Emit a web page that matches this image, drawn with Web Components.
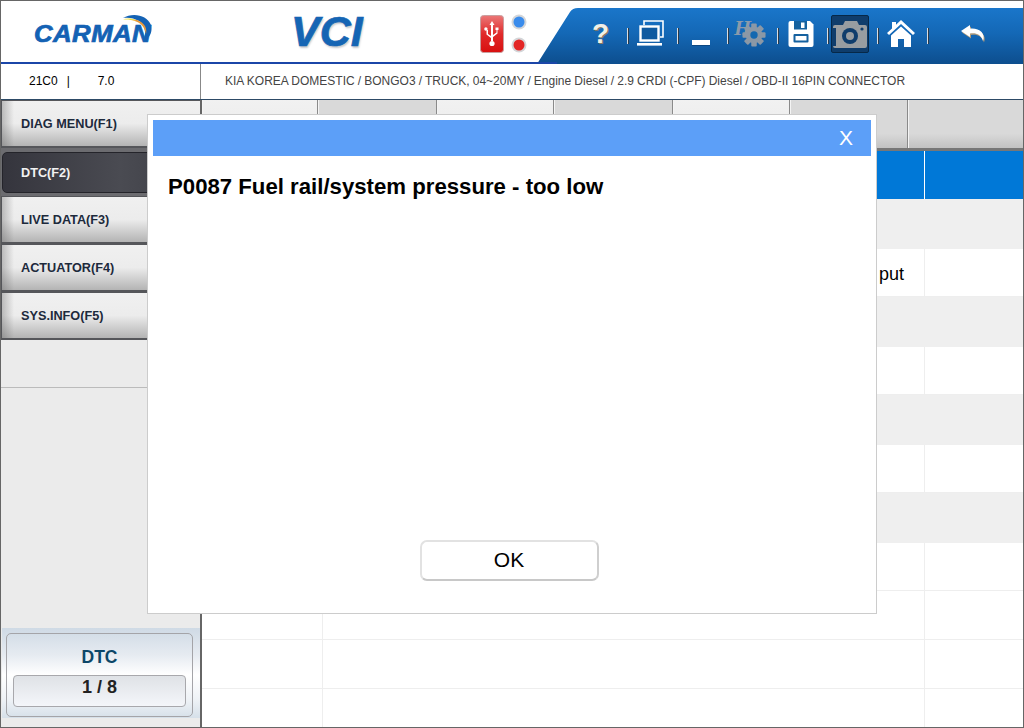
<!DOCTYPE html>
<html>
<head>
<meta charset="utf-8">
<title>CARMAN VCI</title>
<style>
  html, body { margin: 0; padding: 0; background: #fff; font-family: "Liberation Sans", Arial, sans-serif; }
</style>
</head>
<body>
<app-shell>
  <app-header></app-header>
  <info-bar code="21C0" version="7.0">KIA KOREA DOMESTIC / BONGO3 / TRUCK, 04~20MY / Engine Diesel / 2.9 CRDI (-CPF) Diesel / OBD-II 16PIN CONNECTOR</info-bar>
  <main-area>
    <side-menu slot="side">
      <side-button>DIAG MENU(F1)</side-button>
      <side-button active>DTC(F2)</side-button>
      <side-button>LIVE DATA(F3)</side-button>
      <side-button>ACTUATOR(F4)</side-button>
      <side-button>SYS.INFO(F5)</side-button>
    </side-menu>
    <tab-strip slot="content"></tab-strip>
    <dtc-table slot="content"></dtc-table>
  </main-area>
  <dtc-modal title-text="P0087 Fuel rail/system pressure - too low"></dtc-modal>
</app-shell>

<script>
// small helper, every element below is just a template + open shadow root
function tpl(html) {
  const t = document.createElement('template');
  t.innerHTML = html;
  return t;
}

const shellTpl = tpl(`
  <style>
    :host { display: flex; flex-direction: column; position: relative; width: 1024px; height: 728px; box-sizing: border-box; border: 1px solid #666; overflow: hidden; background: #fff; }
  </style>
  <slot></slot>
`);
class AppShell extends HTMLElement {
  constructor() {
    super();
    this.attachShadow({ mode: 'open' }).appendChild(shellTpl.content.cloneNode(true));
  }
}
customElements.define('app-shell', AppShell);

const headerTpl = tpl(`
  <style>
    :host { display: flex; height: 63px; flex: none; background: #fff; }
    .left { width: 556px; flex: none; margin-right: -20px; height: 63px; box-sizing: border-box; border-bottom: 2px solid #1b46a8; display: flex; align-items: flex-start; position: relative; z-index: 1; }
    .logo { width: 119px; height: 44px; margin: 9px 0 0 33px; flex: none; position: relative; }
    .logo span { display: block; padding-top: 12px; font: italic bold 23px/24px "Liberation Sans", sans-serif; color: #1462b4; -webkit-text-stroke: .7px #1462b4; letter-spacing: .4px; transform: scaleX(1.12); transform-origin: left; white-space: nowrap; }
    .logo svg { position: absolute; left: 75px; top: 3px; }
    .vci { margin: 9px 0 0 138px; width: 77px; flex: none; font: italic bold 43px/42px "Liberation Sans", sans-serif; color: #1565b4; -webkit-text-stroke: .7px #1565b4; text-shadow: 1px 2px 2px #c4c8cc; }
    .usb { margin: 14px 0 0 112px; flex: none; display: block; }
    .leds { margin: 13px 0 0 7px; flex: none; display: flex; flex-direction: column; gap: 7px; }
    .led { width: 16px; height: 16px; display: block; }
    .panel { flex: 1; height: 56px; margin-top: 7px; padding-left: 40px; display: flex; align-items: stretch; background: linear-gradient(#1a76ca, #1468b6 45%, #0d4e8e); clip-path: path('M0 56 L33 4 Q35.5 0 41 0 L487 0 L487 56 Z'); }
  </style>
  <div class="left">
    <div class="logo">
      <span>CARMAN</span>
      <svg width="44" height="34" viewBox="0 0 44 34">
        <path d="M14 5 C24 -1 38 2 42 12 C44 20 40 25 34 28 C38 20 36 12 30 8 C25 5 19 4 14 5Z" fill="#1462b4"/>
        <path d="M20 6.5 C27 5.5 33 8.5 36 13 C37.5 16 37.5 19 37 21 C36 15 32 10 27 8.5 C25 7.5 22 7 20 6.5Z" fill="#e8983a"/>
        <path d="M14 6.5 C18 5 23 5 27 7.5 C23 6.8 18 6.3 14 6.5Z" fill="#f0e040"/>
      </svg>
    </div>
    <div class="vci">VCI</div>
    <svg class="usb" width="24" height="38" viewBox="0 0 24 38">
      <defs><linearGradient id="ur" x1="0" y1="0" x2="0" y2="1"><stop offset="0" stop-color="#ea7878"/><stop offset=".5" stop-color="#e02a2a"/><stop offset="1" stop-color="#d81010"/></linearGradient></defs>
      <rect x=".5" y=".5" width="23" height="37" rx="3" fill="url(#ur)" stroke="#c9a0a0"/>
      <path d="M12 6 L14.5 10 H13 V26 H11 V10 H9.5Z M11 23 L6.5 19.5 V15 H8 V19 L11 21Z M13 20 L16.5 17.5 V15 H15.5 V12.5 H18.5 V15 H17.5 V18.5 L13 22Z" fill="#fff"/>
      <circle cx="5.9" cy="14" r="1.7" fill="#fff"/>
      <circle cx="12" cy="28.5" r="2.6" fill="#fff"/>
    </svg>
    <div class="leds">
      <svg class="led" viewBox="0 0 16 16"><circle cx="8" cy="8" r="7.5" fill="#d4d6d9"/><circle cx="8" cy="8" r="5.5" fill="#3a8cec"/></svg>
      <svg class="led" viewBox="0 0 16 16"><circle cx="8" cy="8" r="7.5" fill="#d4d6d9"/><circle cx="8" cy="8" r="5.5" fill="#e32626"/></svg>
    </div>
  </div>
  <div class="panel">
    <tool-button>
      <span style="font:bold 28px/1 'Liberation Sans',sans-serif;color:#f0efe8;text-shadow:1px 1px 0 #8a7a60;margin-left:-3px">?</span>
    </tool-button>
    <tool-button>
      <svg width="30" height="30" viewBox="0 0 30 30" style="margin-left:-2px">
        <path d="M8 6 V2 H27 V18 H24" fill="none" stroke="#fff" stroke-width="1.6"/>
        <rect x="4.5" y="7.5" width="18" height="14" fill="#0f5aa0" stroke="#fff" stroke-width="2.4"/>
        <rect x="1" y="24" width="25" height="2.6" fill="#fff"/>
      </svg>
    </tool-button>
    <tool-button>
      <svg width="22" height="30" viewBox="0 0 22 30" style="margin-left:-2px;margin-top:2px">
        <rect x="2" y="21" width="18" height="5" fill="#06305c" opacity=".5"/>
        <rect x="2" y="20" width="18" height="5" fill="#fff"/>
      </svg>
    </tool-button>
    <tool-button>
      <span style="position:relative;display:block;width:34px;height:36px;margin-left:-2px">
        <span style="position:absolute;left:0;top:1px;font:italic bold 22px/1 'Liberation Serif',serif;color:#8b9aab">H</span>
        <svg style="position:absolute;left:8px;top:7px" width="24" height="24" viewBox="0 0 26 26">
          <g fill="#8b98a6">
            <circle cx="13" cy="13" r="9"/>
            <rect x="10" y=".5" width="6" height="25" rx="1"/>
            <rect x="10" y=".5" width="6" height="25" rx="1" transform="rotate(45 13 13)"/>
            <rect x="10" y=".5" width="6" height="25" rx="1" transform="rotate(90 13 13)"/>
            <rect x="10" y=".5" width="6" height="25" rx="1" transform="rotate(135 13 13)"/>
          </g>
          <circle cx="13" cy="13" r="4" fill="#1468b0"/>
        </svg>
      </span>
    </tool-button>
    <tool-button>
      <svg width="26" height="28" viewBox="0 0 26 28" style="margin-left:-2px">
        <path d="M2.5 1 H22 L25.5 4.5 V25 Q25.5 27 23.5 27 H2.5 Q.5 27 .5 25 V3 Q.5 1 2.5 1Z" fill="#fff"/>
        <rect x="6" y="1" width="13" height="8.5" fill="#15619f"/>
        <rect x="13" y="2.5" width="3.5" height="5.5" fill="#fff"/>
        <rect x="5.5" y="14" width="15" height="8.5" rx="1" fill="#15619f"/>
        <rect x="7.5" y="16" width="11" height="4.5" fill="#fff"/>
      </svg>
    </tool-button>
    <tool-button>
      <span style="display:flex;width:38px;height:38px;box-sizing:border-box;background:#0f3d6c;border:1px solid #062848;border-radius:2px;align-items:center;justify-content:center;margin-left:-5px">
        <svg width="34" height="28" viewBox="0 0 34 28">
          <path d="M2 5 H10 L12 1 H24 L26 5 H32 Q34 5 34 7 V26 Q34 28 32 28 H2 Q0 28 0 26 V7 Q0 5 2 5Z" fill="#989da1"/>
          <circle cx="17" cy="16" r="8" fill="#0f3d6c"/>
          <circle cx="17" cy="16" r="4" fill="#989da1"/>
          <circle cx="29" cy="9" r="1.6" fill="#0f3d6c"/>
          <rect x="0" y="8" width="3" height="18" fill="#0f3d6c"/>
        </svg>
      </span>
    </tool-button>
    <tool-button>
      <svg width="28" height="28" viewBox="0 0 28 28" style="margin-left:-2px">
        <path d="M14 0 L28 13 L26 15 L14 4 L2 15 L0 13 L5 8.5 V2 H9 V4.8Z" fill="#fff"/>
        <path d="M14 6.5 L24 15.5 V27 H17 V19 H11 V27 H4 V15.5Z" fill="#fff"/>
      </svg>
    </tool-button>
    <tool-button wide>
      <svg width="28" height="22" viewBox="0 0 28 22" style="margin-left:-5px">
        <path d="M11 2 L2 8 L11 14 V10.5 C17 9.5 22 11.5 24 18 C27 10 20 4.5 11 5.5Z" fill="#b09a78" transform="translate(1 1.5)"/>
        <path d="M11 2 L2 8 L11 14 V10.5 C17 9.5 22 11.5 24 18 C27 10 20 4.5 11 5.5Z" fill="#fff"/>
      </svg>
    </tool-button>
  </div>
`);
class AppHeader extends HTMLElement {
  constructor() {
    super();
    this.attachShadow({ mode: 'open' }).appendChild(headerTpl.content.cloneNode(true));
  }
}
customElements.define('app-header', AppHeader);

const toolTpl = tpl(`
  <style>
    :host { display: flex; width: 50px; flex: none; box-sizing: border-box; align-items: center; justify-content: center; position: relative; padding-bottom: 4px; }
    :host([wide]) { width: 96px; }
    :host(:not([wide]))::after { content: ""; position: absolute; right: -1px; top: 20px; height: 16px; width: 1px; background: #d8dde2; box-shadow: 1px 0 0 #2a3a4a; }
  </style>
  <slot></slot>
`);
class ToolButton extends HTMLElement {
  constructor() {
    super();
    this.attachShadow({ mode: 'open' }).appendChild(toolTpl.content.cloneNode(true));
  }
}
customElements.define('tool-button', ToolButton);

const infoTpl = tpl(`
  <style>
    :host { display: flex; height: 36px; flex: none; box-sizing: border-box; border-bottom: 1px solid #2d4a66; font: 12px/34px "Liberation Sans", sans-serif; color: #000; background: #fff; }
    .ver { width: 200px; flex: none; box-sizing: border-box; padding-left: 28px; border-right: 1px solid #888; white-space: pre; }
    .ver b { font-weight: normal; display: inline-block; margin-left: 9px; width: 31px; }
    .path { padding-left: 24px; color: #444; white-space: nowrap; word-spacing: -.2px; }
  </style>
  <div class="ver"><span class="code"></span><b>|</b><span class="num"></span></div>
  <div class="path"><slot></slot></div>
`);
class InfoBar extends HTMLElement {
  constructor() {
    super();
    const root = this.attachShadow({ mode: 'open' });
    root.appendChild(infoTpl.content.cloneNode(true));
    root.querySelector('.code').textContent = this.getAttribute('code');
    root.querySelector('.num').textContent = this.getAttribute('version');
  }
}
customElements.define('info-bar', InfoBar);

const mainTpl = tpl(`
  <style>
    :host { display: flex; flex: 1; min-height: 0; }
    .side { display: flex; width: 201px; flex: none; }
    .content { flex: 1; min-width: 0; display: flex; flex-direction: column; overflow: hidden; }
  </style>
  <div class="side"><slot name="side"></slot></div>
  <div class="content"><slot name="content"></slot></div>
`);
class MainArea extends HTMLElement {
  constructor() {
    super();
    this.attachShadow({ mode: 'open' }).appendChild(mainTpl.content.cloneNode(true));
  }
}
customElements.define('main-area', MainArea);

const menuTpl = tpl(`
  <style>
    :host { display: flex; flex-direction: column; width: 100%; box-sizing: border-box; background: #ebebeb; border-right: 2px solid #666; }
    .rest { height: 47px; flex: none; border-bottom: 1px solid #bbb; }
    .push { flex: 1; }
    .count { height: 90px; flex: none; margin: 0 0 9px 1px; padding: 5px 5px 1px 4px; box-sizing: border-box; background: linear-gradient(#cfdae5, #e6ebf1 30%, #fff 52%, #eef2f6 80%, #d6e0e9); display: flex; }
    .box { width: 187px; flex: none; box-sizing: border-box; border: 1px solid #a4a4a8; border-radius: 5px; display: flex; flex-direction: column; align-items: center; padding: 0 6px; }
    .label { font: bold 17.5px/20px "Liberation Sans", sans-serif; color: #0c4668; margin-top: 13px; }
    .val { align-self: stretch; height: 32px; margin-top: 8px; box-sizing: border-box; border: 1px solid #a8a8ac; border-radius: 4px; background: linear-gradient(#dfe2e6, #f4f6fa); text-align: center; font: bold 18px/22px "Liberation Sans", sans-serif; color: #222; }
  </style>
  <slot></slot>
  <div class="rest"></div>
  <div class="push"></div>
  <div class="count">
    <div class="box">
      <div class="label">DTC</div>
      <div class="val">1 / 8</div>
    </div>
  </div>
`);
class SideMenu extends HTMLElement {
  constructor() {
    super();
    this.attachShadow({ mode: 'open' }).appendChild(menuTpl.content.cloneNode(true));
  }
}
customElements.define('side-menu', SideMenu);

const btnTpl = tpl(`
  <style>
    :host { display: block; height: 48px; flex: none; box-sizing: border-box; background: #55565a; padding: 1px 0 2px 1px; font: bold 12.7px/1 "Liberation Sans", sans-serif; color: #1d2a3c; }
    .b { height: 100%; box-sizing: border-box; padding: 2px 0 0 19px; display: flex; align-items: center; background: linear-gradient(90deg, rgba(90,90,90,.35), rgba(90,90,90,0) 12px), linear-gradient(#f0f0f0, #ececec 50%, #b4b4b4); }
    :host([active]) { background: #6c6c70; color: #f2f2f2; padding: 4px 0 3px 1px; }
    :host([active]) .b { background: linear-gradient(90deg, #35353d, #4a4b52 60%, #3c3d44); border: 1px solid #24242a; border-radius: 5px; padding: 1px 0 0 18px; }
  </style>
  <div class="b"><slot></slot></div>
`);
class SideButton extends HTMLElement {
  constructor() {
    super();
    this.attachShadow({ mode: 'open' }).appendChild(btnTpl.content.cloneNode(true));
  }
}
customElements.define('side-button', SideButton);

const tabsTpl = tpl(`
  <style>
    :host { display: flex; height: 51px; flex: none; box-sizing: border-box; border-bottom: 3px solid #777; }
    div { box-sizing: border-box; border-right: 1px solid #8a8a8a; box-shadow: inset 1px 0 0 #f4f4f4; background: linear-gradient(#d9d9d9, #d9d9d9 70%, #c2c2c2); flex: none; }
    div.on { background: linear-gradient(#f1f1f1, #ececec 70%, #d2d2d2); }
  </style>
  <div class="on" style="width:116px"></div>
  <div style="width:119px"></div>
  <div class="on" style="width:117px"></div>
  <div style="width:119px"></div>
  <div class="on" style="width:117px"></div>
  <div style="width:118px"></div>
  <div style="width:115px;border-right:0"></div>
`);
class TabStrip extends HTMLElement {
  constructor() {
    super();
    this.attachShadow({ mode: 'open' }).appendChild(tabsTpl.content.cloneNode(true));
  }
}
customElements.define('tab-strip', TabStrip);

const tableTpl = tpl(`
  <style>
    :host { display: block; flex: 1; min-height: 0; overflow: hidden; font: 18px "Liberation Sans", sans-serif; color: #000; }
    .row { display: grid; grid-template-columns: 121px 602px 97px; height: 49px; box-sizing: border-box; border-bottom: 1px solid #eee; }
    .row.gray { background: #efefef; border-bottom: 0; height: 50px; }
    .row.white { height: 48px; }
    .row.head { background: #0078d7; height: 48px; border: 0; }
    .row > div { border-right: 1px solid #eee; display: flex; align-items: center; justify-content: flex-end; padding-right: 20px; padding-top: 3px; }
    .row.gray > div { border-right: 0; }
    .row.head > div { border-right: 1px solid #fff; }
    .row.head > div:last-child, .row > div:last-child { border-right: 0; padding: 0; }
  </style>
  <div class="row head"><div></div><div></div><div></div></div>
  <div id="rows"></div>
`);
class DtcTable extends HTMLElement {
  constructor() {
    super();
    const root = this.attachShadow({ mode: 'open' });
    root.appendChild(tableTpl.content.cloneNode(true));
    // only the end of row 2 shows past the popup
    const list = root.getElementById('rows');
    for (let i = 0; i < 11; i++) {
      const r = document.createElement('div');
      r.className = 'row' + (i < 8 ? (i % 2 === 0 ? ' gray' : ' white') : '');
      r.innerHTML = '<div></div><div>' + (i === 1 ? 'put' : '') + '</div><div></div>';
      list.appendChild(r);
    }
  }
}
customElements.define('dtc-table', DtcTable);

const modalTpl = tpl(`
  <style>
    :host { position: absolute; left: 146px; top: 113px; width: 730px; height: 500px; box-sizing: border-box; border: 1px solid #ccc; background: #fff; padding: 5px; display: flex; flex-direction: column; }
    .bar { height: 36px; flex: none; background: #5c9ff8; display: flex; justify-content: flex-end; align-items: center; padding-right: 18px; color: #fff; font: 21px "Liberation Sans", sans-serif; }
    h1 { margin: 18px 0 0 15px; font: bold 22.2px/26px "Liberation Sans", sans-serif; color: #000; flex: 1; }
    .foot { display: flex; justify-content: center; padding: 0 0 27px 0; margin-left: -6px; }
    .ok { width: 179px; height: 41px; box-sizing: border-box; border: 2px solid #e2e2e2; border-bottom-color: #c8c8c8; border-right-color: #cfcfcf; border-radius: 7px; background: #fff; font: 21px/35px "Liberation Sans", sans-serif; color: #000; padding: 0 0 2px; }
  </style>
  <div class="bar">X</div>
  <h1></h1>
  <div class="foot"><button class="ok">OK</button></div>
`);
class DtcModal extends HTMLElement {
  constructor() {
    super();
    const root = this.attachShadow({ mode: 'open' });
    root.appendChild(modalTpl.content.cloneNode(true));
    root.querySelector('h1').textContent = this.getAttribute('title-text');
  }
}
customElements.define('dtc-modal', DtcModal);
</script>
</body>
</html>
